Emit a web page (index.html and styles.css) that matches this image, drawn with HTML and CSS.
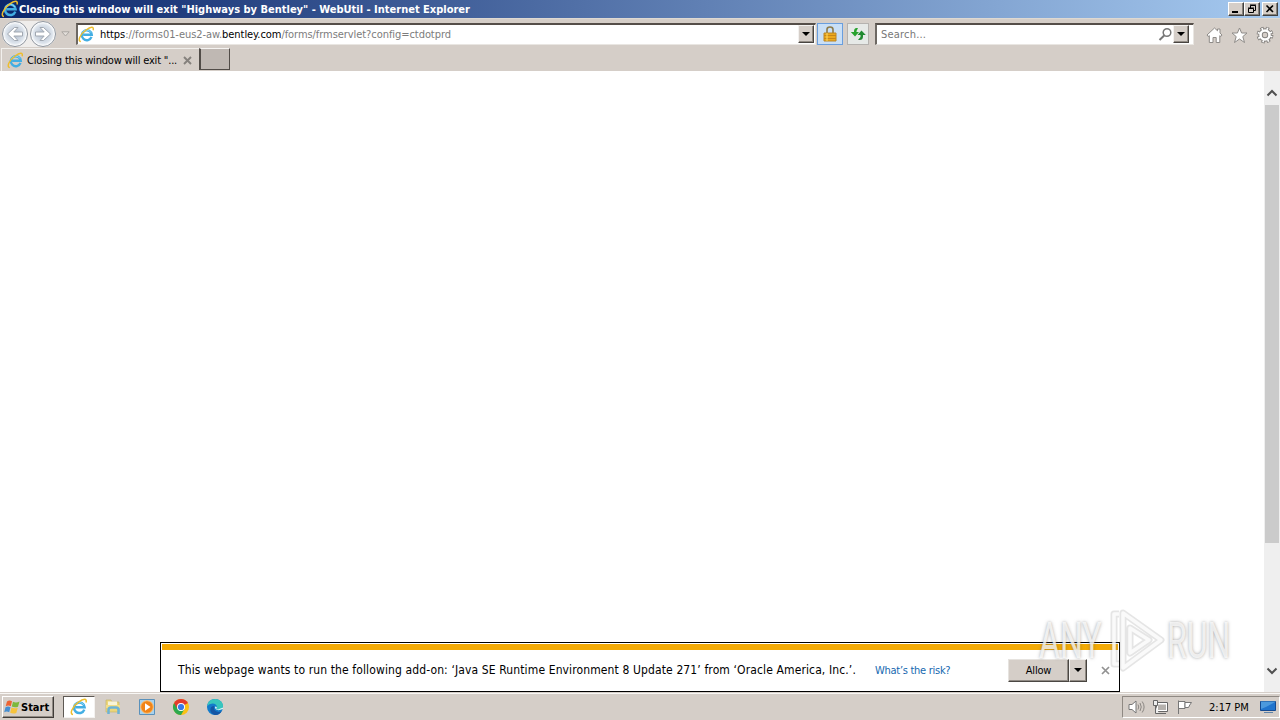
FILE: index.html
```html
<!DOCTYPE html>
<html lang="en">
<head>
    <meta charset="UTF-8">
    <title>Closing this window will exit "Highways by Bentley" - WebUtil - Internet Explorer</title>
    <link rel="stylesheet" href="styles.css">
</head>
<body>
    <!-- Shared icon shapes -->
    <svg class="defs" width="0" height="0">
        <symbol id="ie" viewBox="0 0 18 18">
            <path d="M14.300 11.600A5.300 5.300 0 1 1 14.600 9.300H5.500" fill="none" stroke="#43aee3" stroke-width="2.500"/>
            <path d="M13.800 7A5.300 5.300 0 0 0 4.500 7.200" fill="none" stroke="#8bd8f6" stroke-width="1"/>
            <path d="M3 16.500C-.8 16.200 2 8.800 8.500 4.200 13.500.4 17.300.3 16 4.500" fill="none" stroke="#edbd2c" stroke-width="1.500"/>
        </symbol>
        <symbol id="arrow" viewBox="0 0 24 24">
            <path d="M4.500 12L11.500 5.500H15L10.800 10H19.500V14H10.800L15 18.500H11.500Z" fill="#fff" stroke="#a1a8b1" stroke-width="1"/>
        </symbol>
    </svg>

    <header class="title-bar">
        <svg class="title-icon" width="18" height="18"><use href="#ie"/></svg>
        <h1>Closing this window will exit "Highways by Bentley" - WebUtil - Internet Explorer</h1>
        <div class="window-buttons">
            <span class="win-btn"><svg width="14" height="12"><path d="M3 9H9" stroke="#000" stroke-width="2"/></svg></span>
            <span class="win-btn"><svg width="14" height="12"><path d="M5.500 5V2.500H10.500V7.500H9M5 2H11M3.500 5.500H8.500V9.500H3.500ZM3 5H9" fill="none" stroke="#000"/></svg></span>
            <span class="win-btn close"><svg width="14" height="12"><path d="M3.500 2.500L10 9M10 2.500L3.500 9" stroke="#000" stroke-width="1.600"/></svg></span>
        </div>
    </header>

    <nav class="nav-bar">
        <div class="history">
            <span class="round"><svg width="24" height="24"><use href="#arrow"/></svg></span>
            <span class="round forward"><svg width="24" height="24"><use href="#arrow"/></svg></span>
        </div>
        <svg class="history-menu" width="9" height="6"><path d="M.8.8H8.200L4.500 5Z" fill="#e3dfda" stroke="#aaa6a2"/></svg>
        <div class="field address">
            <svg width="17" height="17"><use href="#ie"/></svg>
            <span class="url"><b>https</b>://forms01-eus2-aw.<b>bentley.com</b>/forms/frmservlet?config=ctdotprd</span>
            <span class="drop"></span>
        </div>
        <span class="tool lock">
            <svg width="14" height="18"><path d="M4 8V4.500Q4 2 7 2T10 4.500V8" fill="none" stroke="#8d7b4b" stroke-width="1.600"/><path d="M1 8H13V16H1Z" fill="#eca91d" stroke="#ba8525"/><path d="M1 10.500H13M1 13.500H13" stroke="#c78719"/><path d="M4 8V16" stroke="#ffda65"/></svg>
        </span>
        <span class="tool refresh">
            <svg width="16" height="16"><path d="M8 2H6.500Q4 2 4 5.500V6H.8L5 10.500L9 6H6.500V5Z" fill="#28a22e"/><path d="M8 14H9.500Q13 14 13 10.500V9H15.800L11.500 4.500L7.500 9H10.500V11Z" fill="#208a31"/></svg>
        </span>
        <div class="field search">
            <span class="placeholder">Search...</span>
            <svg width="15" height="15"><circle cx="9" cy="5.500" r="3.800" fill="none" stroke="#777" stroke-width="1.500"/><path d="M6.200 8.500L1.500 13" stroke="#777" stroke-width="2"/></svg>
            <span class="drop"></span>
        </div>
        <div class="commands">
            <svg width="17" height="17"><path d="M1 8L8.500 1L11.500 3.800V2H14V6.100L16 8L14.800 9.500L13.800 8.600V15.500H10.200V10.500H7V15.500H3.300V8.600L2.200 9.500Z" fill="#fff" stroke="#8e8b88"/></svg>
            <svg width="17" height="17"><path d="M8.500 1L10.600 6H16L11.800 9.600L13.500 15.500L8.500 12L3.500 15.500L5.200 9.600L1 6H6.400Z" fill="#fff" stroke="#8e8b88"/></svg>
            <svg width="18" height="18"><circle cx="9" cy="9" r="6.500" fill="none" stroke="#85827f" stroke-width="3.800" stroke-dasharray="3.100 2.005"/><circle cx="9" cy="9" r="4.500" fill="none" stroke="#85827f" stroke-width="4.400"/><circle cx="9" cy="9" r="6.500" fill="none" stroke="#fff" stroke-width="2.200" stroke-dasharray="1.500 3.605" stroke-dashoffset="-.8"/><circle cx="9" cy="9" r="4.500" fill="none" stroke="#fff" stroke-width="2.600"/></svg>
        </div>
    </nav>

    <div class="tab-bar">
        <div class="tab">
            <svg width="17" height="17"><use href="#ie"/></svg>
            <span class="tab-title">Closing this window will exit "...</span>
            <svg class="tab-close" width="9" height="9"><path d="M1 1L8 8M8 1L1 8" stroke="#85817d" stroke-width="1.900"/></svg>
        </div>
        <div class="new-tab"></div>
    </div>

    <main class="page">
        <div class="scrollbar">
            <svg width="12" height="8"><path d="M1.500 6.500L6 2L10.500 6.500" fill="none" stroke="#505050" stroke-width="2"/></svg>
            <div class="thumb"></div>
            <svg class="down" width="12" height="8"><path d="M1.500 1.500L6 6L10.500 1.500" fill="none" stroke="#505050" stroke-width="2"/></svg>
        </div>

        <div class="notice">
            <span class="notice-text">This webpage wants to run the following add-on: ‘Java SE Runtime Environment 8 Update 271’ from ‘Oracle America, Inc.’.</span>
            <a class="risk">What’s the risk?</a>
            <div class="allow"><span class="allow-label"><span>Allow</span></span><span class="drop"></span></div>
            <svg class="notice-close" width="9" height="9"><path d="M1 1L8 8M8 1L1 8" stroke="#929292" stroke-width="1.700"/></svg>
        </div>
    </main>

    <footer class="taskbar">
        <div class="start">
            <svg width="17" height="17"><path d="M3 2.500Q5.500.5 8 2.300L6.800 7.300Q4.300 5.800 1.700 7.300Z" fill="#ed6331"/><path d="M9 2.700Q12 4.200 15.500 2.500L14 7.800Q10.600 9 7.800 7.500Z" fill="#7cb83b"/><path d="M1.500 8.300Q4 6.700 6.500 8.300L5.200 13.300Q2.700 11.800.2 13.300Z" fill="#468ed1"/><path d="M7.500 8.600Q10.300 10 13.800 8.800L12.300 14Q9 15.200 6.200 13.700Z" fill="#f6c33d"/></svg>
            <span>Start</span>
        </div>
        <div class="task active"><svg width="18" height="18"><use href="#ie"/></svg></div>
        <div class="task"><svg width="18" height="18"><path d="M2 2H7L8 4H15V14H2Z" fill="#ecd679" stroke="#c7b66b" stroke-width=".7"/><path d="M4 3.500H13V7H4Z" fill="#f8f4d8"/><path d="M2 7H16V10H2Z" fill="#f3dd86"/><path d="M4.500 16V12Q4.500 9.500 7 9.500H12Q14.500 9.500 14.500 12V16" fill="none" stroke="#6cb3d5" stroke-width="2.500"/></svg></div>
        <div class="task"><svg width="18" height="18"><path d="M1.500 1.500H16.500V16.500H1.500Z" fill="#a9d2ed" stroke="#5a91bb"/><circle cx="9" cy="9" r="6.300" fill="#f18417" stroke="#ffc070"/><path d="M7 5.200L12.500 9L7 12.800Z" fill="#fff"/></svg></div>
        <div class="task"><svg width="18" height="18"><circle cx="9" cy="9" r="8" fill="#fbc116"/><path d="M9 9L2.070 5A8 8 0 0 1 15.930 5Z" fill="#e33b2e"/><path d="M9 9L2.070 5A8 8 0 0 0 9 17L12.500 11Z" fill="#2da94f"/><path d="M2.070 5L5.500 11L9 5Z" fill="#e33b2e"/><circle cx="9" cy="9" r="4" fill="#fff"/><circle cx="9" cy="9" r="3.100" fill="#3979e8"/></svg></div>
        <div class="task"><svg width="18" height="18"><circle cx="9" cy="9" r="8" fill="#137bcb"/><path d="M1.300 8Q2 1 9.500 1Q17 2 17 8.500Q16.500 12 12 12Q9.500 12 11 9Q10.500 5.500 6.500 5.500Q3 5.500 1.300 8Z" fill="#38c6bd"/><path d="M8 8Q6.800 13 12.500 14Q14.500 14 16 12.500Q13 18 8 16.800Q3.500 14.500 4.500 10.500Q5 8 8 8Z" fill="#1555a4"/><path d="M9 8.500Q8.500 11.500 12.500 12.200L17 11V9.500L12 11.500Q9.500 11.500 11 9Z" fill="#d8f3f5"/></svg></div>

        <div class="tray">
            <svg width="18" height="16"><path d="M1 5.500H4L8 2V14L4 10.500H1Z" fill="#fff" stroke="#777"/><path d="M10 5.500Q11.500 8 10 10.500M12 4Q14.500 8 12 12M14.200 2.500Q18 8 14.200 13.500" fill="none" stroke="#8b8783"/></svg>
            <svg width="18" height="16"><path d="M4.500 3.500H15.500V12.500H4.500Z" fill="#fff" stroke="#666"/><path d="M6 5.500H14V11H6Z" fill="#b5b1ad"/><path d="M7 14.500H14" stroke="#666"/><path d="M1.500 1.500H5.500V6.500H1.500ZM3.500 6.500V14.500H7" fill="#eee" stroke="#666"/></svg>
            <svg width="18" height="16"><path d="M2.500 15V1.500M3 2.500H9V9.500H3" fill="#fff" stroke="#777"/><path d="M9 3.500H15.500Q13.500 6 12.500 8.500H9Z" fill="#fff" stroke="#777"/></svg>
            <span class="clock">2:17 PM</span>
            <svg class="desktop" width="16" height="14"><path d="M.5 1.500H15.500V10.500H.5Z" fill="#2174cd" stroke="#154a91"/><path d="M1 9Q7 7 15 2V1.500H1Z" fill="#4c99dd"/><path d="M4 12.500H13" stroke="#5f82a7"/></svg>
        </div>
    </footer>

    <div class="watermark">
        <span class="mark-text"><span>ANY</span></span>
        <svg width="62" height="68" viewBox="0 0 62 68"><g fill="none" stroke-linejoin="round"><path d="M14 7H9V57H14M18 6L56 33L18 61ZM25 21L44 33L25 46Z" stroke="#888" stroke-opacity=".22" stroke-width="7"/><path d="M14 7H9V57H14M18 6L56 33L18 61ZM25 21L44 33L25 46Z" stroke="#fff" stroke-opacity=".8" stroke-width="3.500"/></g></svg>
        <span class="mark-text"><span>RUN</span></span>
    </div>
</body>
</html>
```
FILE: styles.css
```css
* {
    box-sizing: border-box;
}
body {
    margin: 0;
    width: 1280px;
    height: 720px;
    overflow: hidden;
    display: flex;
    flex-direction: column;
    position: relative;
    background: #d5cec8;
    color: #000;
    font-family: 'DejaVu Sans Condensed', 'DejaVu Sans', sans-serif;
    font-size: 11px;
    white-space: nowrap;
}
svg {
    display: block;
    flex: none;
}
.defs {
    position: absolute;
}

/* Title bar */
.title-bar {
    height: 18px;
    flex: none;
    display: flex;
    align-items: center;
    padding: 0 2px 0 1px;
    background: linear-gradient(to right, #0b266b, #a6caf0);
    color: #fff;
}
h1 {
    margin: 0;
    font-size: 11px;
    font-weight: bold;
}
.window-buttons {
    display: flex;
    margin-left: auto;
}
.win-btn {
    width: 16px;
    height: 14px;
    background: #d5cec8;
    border: 1px solid;
    border-color: #fff #404040 #404040 #fff;
    box-shadow: inset -1px -1px #858079;
}
.win-btn.close {
    margin-left: 2px;
}

/* Navigation bar */
.nav-bar {
    height: 30px;
    flex: none;
    display: flex;
    align-items: center;
    border-top: 1px solid #ded9d2;
}
.history {
    display: flex;
    gap: 2px;
    margin-left: 2px;
    background: #efedeb;
    border-radius: 14px;
}
.round {
    width: 26px;
    height: 26px;
    border: 1px solid #8f969f;
    border-radius: 50%;
    background: radial-gradient(circle, #b9c4d3 15%, #dde4ec 55%, #fff 70%);
}
.forward svg {
    transform: scaleX(-1);
}
.history-menu {
    margin-left: 5px;
}
.field {
    height: 22px;
    display: flex;
    align-items: center;
    background: #fff;
    border: 1px solid #e9e6e2;
    border-top: 2px solid #554e49;
    border-left: 2px solid #6d6863;
}
.address {
    width: 740px;
    margin-left: 6px;
}
.url {
    margin-left: 5px;
    color: #7c7c7c;
    letter-spacing: -0.06px;
}
.url b {
    color: #000;
    font-weight: normal;
}
.drop {
    width: 16px;
    height: 18px;
    flex: none;
    display: flex;
    align-items: center;
    justify-content: center;
    margin-left: auto;
    background: #d5cec8;
    border: 1px solid;
    border-color: #f3f1ef #484440 #484440 #f3f1ef;
    box-shadow: inset -1px -1px #928c85;
}
.drop::before {
    content: "";
    border: 4px solid transparent;
    border-top-color: #000;
    border-bottom: 0;
}
.address .drop,
.search .drop {
    position: relative;
    left: -1px;
}
.tool {
    height: 22px;
    display: flex;
    align-items: center;
    justify-content: center;
}
.lock {
    width: 26px;
    margin-left: 1px;
    background: #c9dff6;
    border: 1px solid #699ede;
}
.refresh {
    width: 22px;
    margin-left: 4px;
    background: #e6e9e7;
    border: 1px solid #b5b2af;
}
.search {
    width: 319px;
    margin-left: 6px;
    padding-left: 4px;
    padding-right: 3px;
}
.search svg {
    margin-left: auto;
    margin-right: 1px;
}
.search .drop {
    margin-left: 0;
}
.placeholder {
    color: #777;
    letter-spacing: 0.2px;
}
.commands {
    display: flex;
    align-items: center;
    gap: 8px;
    margin-left: 12px;
    padding-top: 3px;
}

/* Tabs */
.tab-bar {
    height: 23px;
    flex: none;
    display: flex;
}
.tab {
    width: 198px;
    display: flex;
    align-items: center;
    margin-left: 1px;
    padding-left: 5px;
    border-top: 1px solid #f2f0ed;
    border-left: 1px solid #f2f0ed;
}
.tab-title {
    margin-left: 3px;
    letter-spacing: -0.18px;
}
.tab-close {
    margin-left: auto;
    margin-right: 7px;
}
.new-tab {
    width: 31px;
    height: 22px;
    background: #bfb8b3;
    border: 1px solid #514c48;
    border-top-color: #f6f4f2;
    border-left-width: 2px;
}

/* Web page */
.page {
    height: 621px;
    flex: none;
    position: relative;
    display: flex;
    justify-content: flex-end;
    background: #fff;
}
.scrollbar {
    width: 16px;
    display: flex;
    flex-direction: column;
    align-items: center;
    padding: 18px 0 17px;
    background: #efefef;
}
.thumb {
    width: 14px;
    height: 438px;
    margin-top: 8px;
    background: #cbcbcb;
}
.down {
    margin-top: auto;
}

/* Add-on notification lies over the page */
.notice {
    position: absolute;
    left: 160px;
    bottom: 0;
    width: 960px;
    height: 50px;
    display: flex;
    align-items: center;
    padding: 6px 9px 0 17px;
    border: 1px solid #000;
    background: #fff;
}
.notice::before {
    content: "";
    position: absolute;
    top: 1px;
    left: 1px;
    right: 1px;
    height: 6px;
    background: #f3aa05;
}
.notice-text {
    width: 697px;
    font-size: 12px;
    letter-spacing: 0.12px;
}
.risk {
    color: #1668b0;
    letter-spacing: -0.28px;
}
.allow {
    display: flex;
    margin-left: auto;
    margin-right: 14px;
}
.allow-label {
    width: 61px;
    height: 23px;
    display: flex;
    align-items: center;
    justify-content: center;
    background: #d5cec8;
    border: 1px solid;
    border-color: #e6e3df #4b4743 #4b4743 #e6e3df;
    box-shadow: inset -1px -1px #918b85;
    letter-spacing: -0.2px;
}
.allow .drop {
    width: 18px;
    height: 23px;
}

/* Taskbar */
.taskbar {
    height: 28px;
    flex: none;
    display: flex;
    align-items: center;
    padding: 1px 0 0 2px;
    border-top: 1px solid #d5cec8;
    box-shadow: inset 0 1px #f8f7f5;
}
.start {
    width: 52px;
    height: 22px;
    display: flex;
    align-items: center;
    margin-right: 9px;
    padding-left: 1px;
    border: 1px solid;
    border-color: #fff #403c38 #403c38 #fff;
    box-shadow: inset -1px -1px #918b85;
    font-weight: bold;
}
.task {
    width: 32px;
    height: 22px;
    display: flex;
    align-items: center;
    justify-content: center;
    margin-right: 2px;
}
.task.active {
    background: #fff;
    border: 1px solid;
    border-color: #5e5954 #f4f2f0 #f4f2f0 #5e5954;
}
.tray {
    width: 158px;
    height: 22px;
    display: flex;
    align-items: center;
    gap: 6px;
    margin-left: auto;
    padding-left: 5px;
    border: 1px solid;
    border-color: #8f8983 #fff #fff #8f8983;
}
.clock {
    margin-left: 9px;
}
.desktop {
    margin-left: auto;
    margin-right: 3px;
}

/* Logo over the lower right corner */
.watermark {
    position: absolute;
    left: 1039px;
    top: 607px;
    display: flex;
    align-items: center;
}
.mark-text {
    width: 66px;
    color: rgba(255, 255, 255, 0.75);
    font-family: Roboto, sans-serif;
    font-size: 50px;
    line-height: 42px;
    text-shadow: 0 0 4px rgba(90, 90, 90, 0.55);
}
.mark-text span {
    display: inline-block;
    transform: scaleX(0.64);
    transform-origin: left;
}
```
